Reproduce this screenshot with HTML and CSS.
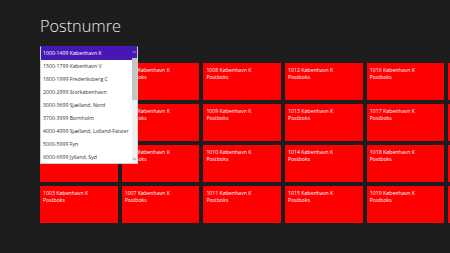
FILE: index.html
```html
<!DOCTYPE html>
<html lang="da">
<head>
    <meta charset="UTF-8">
    <title>Postnumre</title>
    <link rel="stylesheet" href="styles.css">
</head>
<body>
    <div class="page">
        <h1 class="title">Postnumre</h1>

        <div class="filter">
            <div class="picker">
                <ul class="options">
                    <li class="selected">1000-1499 København K</li>
                    <li>1500-1799 København V</li>
                    <li>1800-1999 Frederiksberg C</li>
                    <li>2000-2999 Storkøbenhavn</li>
                    <li>3000-3699 Sjælland, Nord</li>
                    <li>3700-3999 Bornholm</li>
                    <li>4000-4999 Sjælland, Lolland-Falster</li>
                    <li>5000-5999 Fyn</li>
                    <li>6000-6999 Jylland, Syd</li>
                </ul>
                <div class="scrollbar">
                    <div class="arrow up">
                        <svg viewBox="0 0 6 4" width="5" height="4"><path d="M1 3 L3 1 L5 3" fill="none" stroke="#c8c0e8" stroke-width="1"/></svg>
                    </div>
                    <div class="thumb"></div>
                    <div class="track"></div>
                    <div class="arrow down">
                        <svg viewBox="0 0 6 4" width="5" height="4"><path d="M1 1 L3 3 L5 1" fill="none" stroke="#777" stroke-width="1"/></svg>
                    </div>
                </div>
            </div>
        </div>

        <div class="tiles">
            <div class="tile"><span>1000 København K</span><span>Postboks</span></div>
            <div class="tile"><span>1001 København K</span><span>Postboks</span></div>
            <div class="tile"><span>1002 København K</span><span>Postboks</span></div>
            <div class="tile"><span>1003 København K</span><span>Postboks</span></div>
            <div class="tile"><span>1004 København K</span><span>Postboks</span></div>
            <div class="tile"><span>1005 København K</span><span>Postboks</span></div>
            <div class="tile"><span>1006 København K</span><span>Postboks</span></div>
            <div class="tile"><span>1007 København K</span><span>Postboks</span></div>
            <div class="tile"><span>1008 København K</span><span>Postboks</span></div>
            <div class="tile"><span>1009 København K</span><span>Postboks</span></div>
            <div class="tile"><span>1010 København K</span><span>Postboks</span></div>
            <div class="tile"><span>1011 København K</span><span>Postboks</span></div>
            <div class="tile"><span>1012 København K</span><span>Postboks</span></div>
            <div class="tile"><span>1013 København K</span><span>Postboks</span></div>
            <div class="tile"><span>1014 København K</span><span>Postboks</span></div>
            <div class="tile"><span>1015 København K</span><span>Postboks</span></div>
            <div class="tile"><span>1016 København K</span><span>Postboks</span></div>
            <div class="tile"><span>1017 København K</span><span>Postboks</span></div>
            <div class="tile"><span>1018 København K</span><span>Postboks</span></div>
            <div class="tile"><span>1019 København K</span><span>Postboks</span></div>
            <div class="tile"><span>1020 København K</span><span>Postboks</span></div>
            <div class="tile"><span>1021 København K</span><span>Postboks</span></div>
            <div class="tile"><span>1022 København K</span><span>Postboks</span></div>
            <div class="tile"><span>1023 København K</span><span>Postboks</span></div>
        </div>
    </div>
</body>
</html>
```

FILE: styles.css
```css
* {
    margin: 0;
    padding: 0;
    box-sizing: border-box;
}

html, body {
    width: 450px;
    height: 253px;
    overflow: hidden;
}

body {
    font-family: "Open Sans", "Noto Sans", sans-serif;
    background: #1d1d1d;
    color: #fff;
}

.page {
    padding-left: 40px;
}

.title {
    height: 45.5px;
    padding-top: 14.5px;
    font-size: 16.3px;
    font-weight: 300;
    line-height: 22px;
    color: #e8e8e8;
}

.filter {
    position: relative;
    height: 17.5px;
    z-index: 2;
}

.picker {
    position: absolute;
    left: 0;
    top: 0;
    width: 97.5px;
    height: 118.5px;
    display: flex;
    background: #fff;
    border: 1px solid #cfcfcf;
    border-top-color: #4617b4;
}

.options {
    list-style: none;
    flex: 1;
}

.options li {
    height: 13.1px;
    padding-left: 2px;
    font-size: 5.2px;
    line-height: 13.1px;
    color: #333;
    white-space: nowrap;
}

.options li.selected {
    background: #4617b4;
    color: #fff;
}

.scrollbar {
    width: 5px;
    display: flex;
    flex-direction: column;
    background: #f0f0f0;
}

.arrow {
    height: 11.5px;
    display: flex;
    align-items: center;
    justify-content: center;
}

.arrow.up {
    background: #4617b4;
}

.arrow.down {
    height: 9px;
}

.thumb {
    height: 42px;
    background: #c4c4c4;
}

.track {
    flex: 1;
}

.tiles {
    display: grid;
    grid-auto-flow: column;
    grid-template-rows: repeat(4, 37px);
    grid-auto-columns: 77.7px;
    gap: 4.1px 4px;
}

.tile {
    background: #ff0000;
    padding: 3.5px 3px;
    display: flex;
    flex-direction: column;
    font-size: 5.2px;
    line-height: 7.6px;
    white-space: nowrap;
}
```
